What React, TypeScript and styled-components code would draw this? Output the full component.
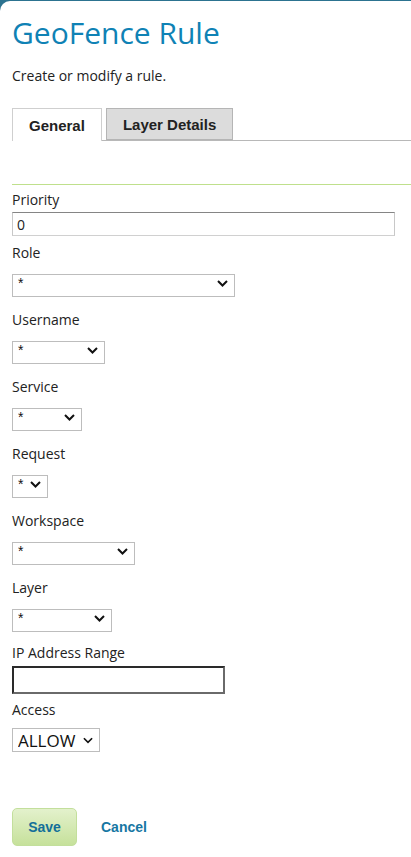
import React from "react";
import styled, { createGlobalStyle } from "styled-components";

const GlobalStyle = createGlobalStyle`
  html, body {
    margin: 0;
    padding: 0;
    background: #2c7390;
  }
  body {
    font-family: "Open Sans", "Noto Sans", sans-serif;
    color: #222;
  }
`;

const Page = styled.div`
  margin-top: 1px;
  min-height: 856px;
  background: #fff;
  border-top-left-radius: 10px;
  padding: 0 0 0 12px;
  box-sizing: border-box;
`;

const Title = styled.h1`
  margin: 0;
  padding-top: 14px;
  font-size: 30px;
  font-weight: 400;
  line-height: 36px;
  color: #0f82b5;
`;

const Intro = styled.p`
  margin: 16px 0 0;
  font-size: 14px;
  line-height: 18px;
`;

const Tabs = styled.div`
  display: flex;
  align-items: flex-end;
  margin-top: 23px;
  border-bottom: 1px solid #b8b8b8;
`;

const Tab = styled.div<{ $active?: boolean }>`
  box-sizing: border-box;
  height: ${(p) => (p.$active ? "33px" : "32px")};
  margin-bottom: ${(p) => (p.$active ? "-1px" : "0")};
  margin-right: 4px;
  padding: 0 16px;
  display: flex;
  align-items: center;
  font-family: "Liberation Sans", Arial, sans-serif;
  font-weight: 700;
  font-size: 15px;
  color: #222;
  background: ${(p) => (p.$active ? "#fff" : "#dcdcdc")};
  border: 1px solid ${(p) => (p.$active ? "#cfcfcf" : "#b5b5b5")};
  border-bottom: ${(p) => (p.$active ? "none" : "1px solid #b5b5b5")};
`;

const Rule = styled.div`
  margin-top: 43px;
  height: 1px;
  background: #bfe08c;
`;

const Form = styled.form`
  display: flex;
  flex-direction: column;
  align-items: flex-start;
  padding-top: 5px;
`;

const Label = styled.label<{ $tight?: boolean }>`
  font-size: 14px;
  line-height: 20px;
  margin-top: ${(p) => (p.$tight ? "-2px" : "0")};
  color: #222;
`;

const TextInput = styled.input<{ $width: number; $strong?: boolean }>`
  box-sizing: border-box;
  width: ${(p) => p.$width}px;
  height: ${(p) => (p.$strong ? 28 : 24)}px;
  margin: ${(p) => (p.$strong ? "3px 0 6px" : "2px 0 7px")};
  padding: 0 4px;
  font-family: "Open Sans", sans-serif;
  font-size: 14px;
  color: #222;
  outline: none;
  background: #fff;
  border-style: solid;
  border-width: ${(p) => (p.$strong ? "2px" : "1px")};
  border-color: ${(p) =>
    p.$strong
      ? "#2a2a2a #6a6a6a #6a6a6a #2a2a2a"
      : "#858585 #c8c8c8 #d0d0d0 #c8c8c8"};
`;

const SelectWrap = styled.div<{ $width: number; $big?: boolean }>`
  position: relative;
  width: ${(p) => p.$width}px;
  height: ${(p) => (p.$big ? 24 : 23)}px;
  margin: 8px 0 16px;
`;

const Select = styled.select<{ $big?: boolean }>`
  appearance: none;
  -webkit-appearance: none;
  box-sizing: border-box;
  width: 100%;
  height: 100%;
  margin: 0;
  padding: ${(p) => (p.$big ? "0 0 0 5px" : "0 0 5px 5px")};
  font-family: ${(p) =>
    p.$big ? '"Open Sans", sans-serif' : '"Liberation Sans", Arial, sans-serif'};
  font-size: ${(p) => (p.$big ? "17px" : "14px")};
  color: #111;
  background: #fff;
  border: 1px solid #bdbdbd;
  border-radius: 0;
  outline: none;
`;

const Chevron = styled.svg<{ $thin?: boolean }>`
  position: absolute;
  right: 7px;
  top: 50%;
  width: ${(p) => (p.$thin ? 10 : 11)}px;
  height: 7px;
  margin-top: -3px;
  pointer-events: none;
`;

const Actions = styled.div`
  display: flex;
  align-items: center;
  gap: 24px;
  margin-top: 40px;
`;

const SaveButton = styled.button`
  box-sizing: border-box;
  width: 65px;
  height: 38px;
  border: 1px solid #c3df9c;
  border-radius: 5px;
  background: linear-gradient(#e3f1cc, #c6e19b);
  font-family: "Liberation Sans", Arial, sans-serif;
  font-weight: 700;
  font-size: 14px;
  color: #136f99;
  cursor: pointer;
`;

const CancelLink = styled.a`
  font-family: "Liberation Sans", Arial, sans-serif;
  font-weight: 700;
  font-size: 14px;
  color: #1777a3;
  text-decoration: none;
`;

const Dropdown: React.FC<{ width: number; value: string; big?: boolean }> = ({
  width,
  value,
  big,
}) => (
  <SelectWrap $width={width} $big={big}>
    <Select $big={big} defaultValue={value}>
      <option>{value}</option>
    </Select>
    <Chevron viewBox="0 0 11 7" $thin={big}>
      <path
        d="M1 1l4.5 4.5L10 1"
        fill="none"
        stroke="#111"
        strokeWidth={big ? 1.8 : 2}
      />
    </Chevron>
  </SelectWrap>
);

const fields: { label: string; width: number }[] = [
  { label: "Role", width: 223 },
  { label: "Username", width: 93 },
  { label: "Service", width: 70 },
  { label: "Request", width: 36 },
  { label: "Workspace", width: 123 },
  { label: "Layer", width: 100 },
];

export default function App() {
  return (
    <>
      <GlobalStyle />
      <Page>
        <Title>GeoFence Rule</Title>
        <Intro>Create or modify a rule.</Intro>
        <Tabs>
          <Tab $active>General</Tab>
          <Tab>Layer Details</Tab>
        </Tabs>
        <Rule />
        <Form onSubmit={(e) => e.preventDefault()}>
          <Label>Priority</Label>
          <TextInput $width={383} defaultValue="0" />
          {fields.map((f) => (
            <React.Fragment key={f.label}>
              <Label>{f.label}</Label>
              <Dropdown width={f.width} value="*" />
            </React.Fragment>
          ))}
          <Label $tight>IP Address Range</Label>
          <TextInput $width={213} $strong />
          <Label>Access</Label>
          <Dropdown width={88} value="ALLOW" big />
          <Actions>
            <SaveButton type="submit">Save</SaveButton>
            <CancelLink href="#">Cancel</CancelLink>
          </Actions>
        </Form>
      </Page>
    </>
  );
}
